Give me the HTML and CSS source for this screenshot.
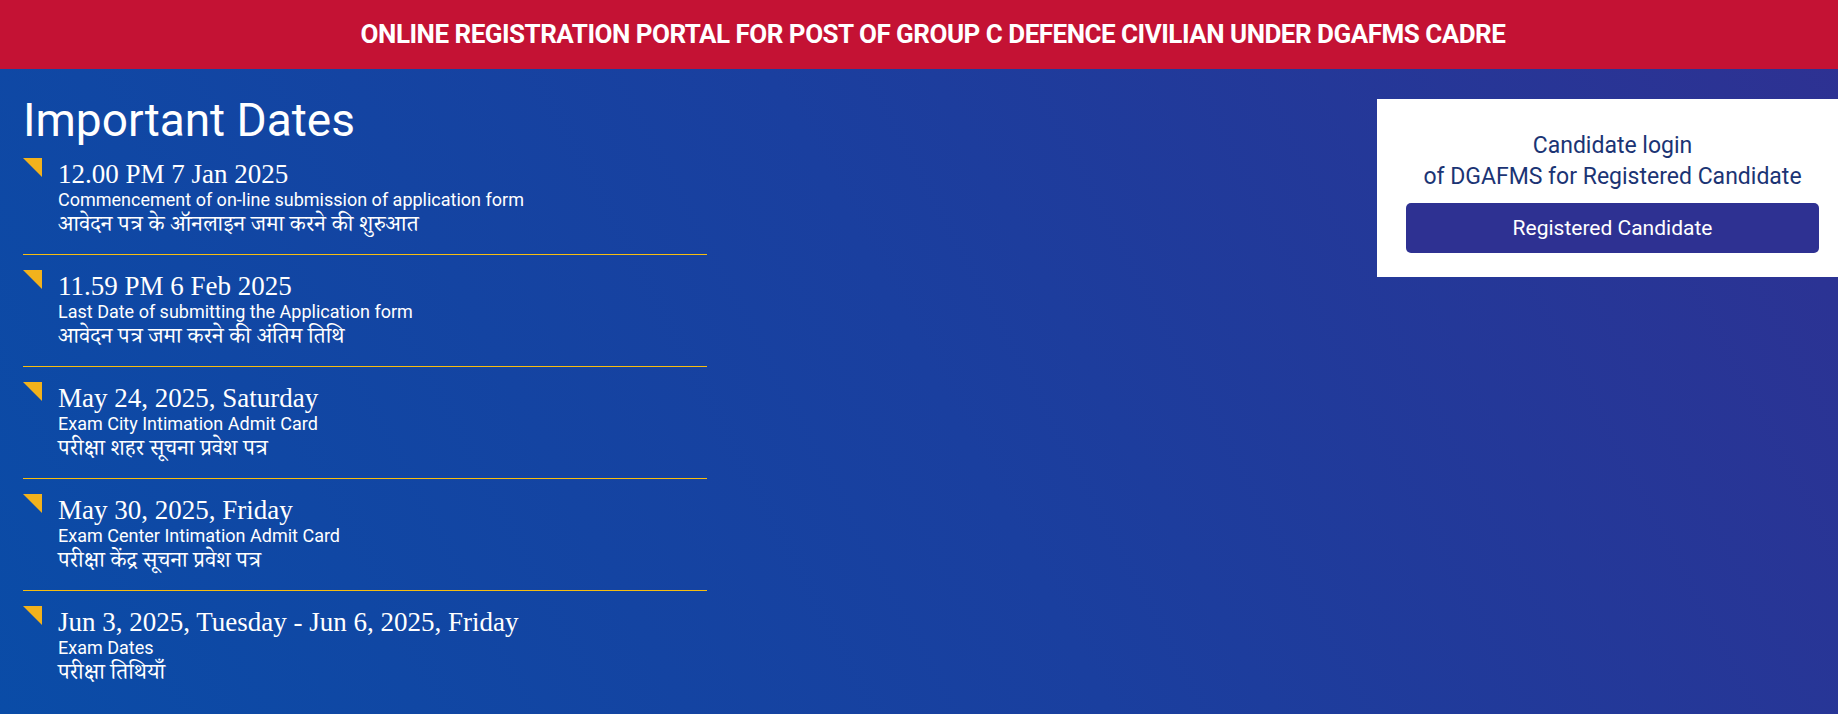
FILE: index.html
```html
<!DOCTYPE html>
<html lang="en">
<head>
<meta charset="utf-8">
<title>DGAFMS Registration</title>
<link rel="stylesheet" href="styles.css">
</head>
<body>
<div class="page">
  <header class="topbar">ONLINE REGISTRATION PORTAL FOR POST OF GROUP C DEFENCE CIVILIAN UNDER DGAFMS CADRE</header>
  <main class="main">
    <section class="dates">
      <h1 class="dates-title">Important Dates</h1>
      <ul class="date-list">
        <li class="date-item">
          <span class="marker"></span>
          <div class="date-body">
            <div class="date-when">12.00 PM 7 Jan 2025</div>
            <div class="date-en">Commencement of on-line submission of application form</div>
            <div class="date-hi">आवेदन पत्र के ऑनलाइन जमा करने की शुरुआत</div>
          </div>
        </li>
        <li class="date-item">
          <span class="marker"></span>
          <div class="date-body">
            <div class="date-when">11.59 PM 6 Feb 2025</div>
            <div class="date-en">Last Date of submitting the Application form</div>
            <div class="date-hi">आवेदन पत्र जमा करने की अंतिम तिथि</div>
          </div>
        </li>
        <li class="date-item">
          <span class="marker"></span>
          <div class="date-body">
            <div class="date-when">May 24, 2025, Saturday</div>
            <div class="date-en">Exam City Intimation Admit Card</div>
            <div class="date-hi">परीक्षा शहर सूचना प्रवेश पत्र</div>
          </div>
        </li>
        <li class="date-item">
          <span class="marker"></span>
          <div class="date-body">
            <div class="date-when">May 30, 2025, Friday</div>
            <div class="date-en">Exam Center Intimation Admit Card</div>
            <div class="date-hi">परीक्षा केंद्र सूचना प्रवेश पत्र</div>
          </div>
        </li>
        <li class="date-item last">
          <span class="marker"></span>
          <div class="date-body">
            <div class="date-when">Jun 3, 2025, Tuesday - Jun 6, 2025, Friday</div>
            <div class="date-en">Exam Dates</div>
            <div class="date-hi">परीक्षा तिथियाँ</div>
          </div>
        </li>
      </ul>
    </section>
    <aside class="login-card">
      <p class="login-text">Candidate login<br>of DGAFMS for Registered Candidate</p>
      <a class="login-btn" href="#">Registered Candidate</a>
    </aside>
  </main>
</div>
</body>
</html>
```
FILE: styles.css
```css
html, body {
  margin: 0;
  padding: 0;
}
body {
  font-family: Roboto, "Liberation Sans", Arial, sans-serif;
  color: #fff;
  overflow: hidden;
}
.page {
  min-height: 100vh;
  display: flex;
  flex-direction: column;
  background: linear-gradient(62deg, #0a4ca7 0%, #1a3f9f 50%, #2e3192 100%);
}
.topbar {
  height: 69px;
  background: #c41234;
  color: #fff;
  font-family: Roboto, "Liberation Sans", sans-serif;
  font-weight: 700;
  font-size: 26px;
  letter-spacing: -0.5px;
  display: flex;
  align-items: center;
  justify-content: center;
  padding-left: 28px;
  padding-bottom: 2px;
  box-sizing: border-box;
}
.main {
  flex: 1;
  display: flex;
  justify-content: space-between;
  align-items: flex-start;
  padding-top: 28px;
}
.dates {
  padding-left: 23px;
  width: 684px;
}
.dates-title {
  margin: 0;
  font-family: Roboto, sans-serif;
  font-weight: 400;
  font-size: 46px;
  line-height: 46px;
  color: #fff;
}
.date-list {
  list-style: none;
  margin: 0;
  padding: 0;
}
.date-item {
  display: flex;
  gap: 16px;
  padding: 17px 0 13px;
  border-bottom: 1px solid #f7bd0f;
}
.date-item.last {
  border-bottom: none;
}
.marker {
  flex: 0 0 19px;
  width: 19px;
  height: 19px;
  margin-top: -2px;
  background: #f2b21c;
  clip-path: polygon(0 0, 100% 0, 100% 100%);
}
.date-body {
  display: flex;
  flex-direction: column;
}
.date-when {
  font-family: "Liberation Serif", "Times New Roman", serif;
  font-size: 27px;
  line-height: 28px;
}
.date-en {
  font-family: Roboto, sans-serif;
  font-size: 18px;
  line-height: 24px;
}
.date-hi {
  margin-top: 3px;
  font-family: "Noto Serif Devanagari", "Noto Sans Devanagari", "Lohit Devanagari", "FreeSerif", "Noto Sans", sans-serif;
  font-size: 22.5px;
  line-height: 26px;
}
.login-card {
  margin-top: 2px;
  width: 461px;
  box-sizing: border-box;
  background: #fff;
  padding: 31px 19px 24px 29px;
  text-align: center;
}
.login-text {
  margin: 0 0 11px;
  font-family: Roboto, sans-serif;
  font-size: 23px;
  line-height: 31px;
  color: #1b3474;
}
.login-btn {
  display: flex;
  align-items: center;
  justify-content: center;
  height: 50px;
  border-radius: 5px;
  background: #2e3192;
  color: #fff;
  font-family: Roboto, sans-serif;
  font-size: 21px;
  text-decoration: none;
}
```
